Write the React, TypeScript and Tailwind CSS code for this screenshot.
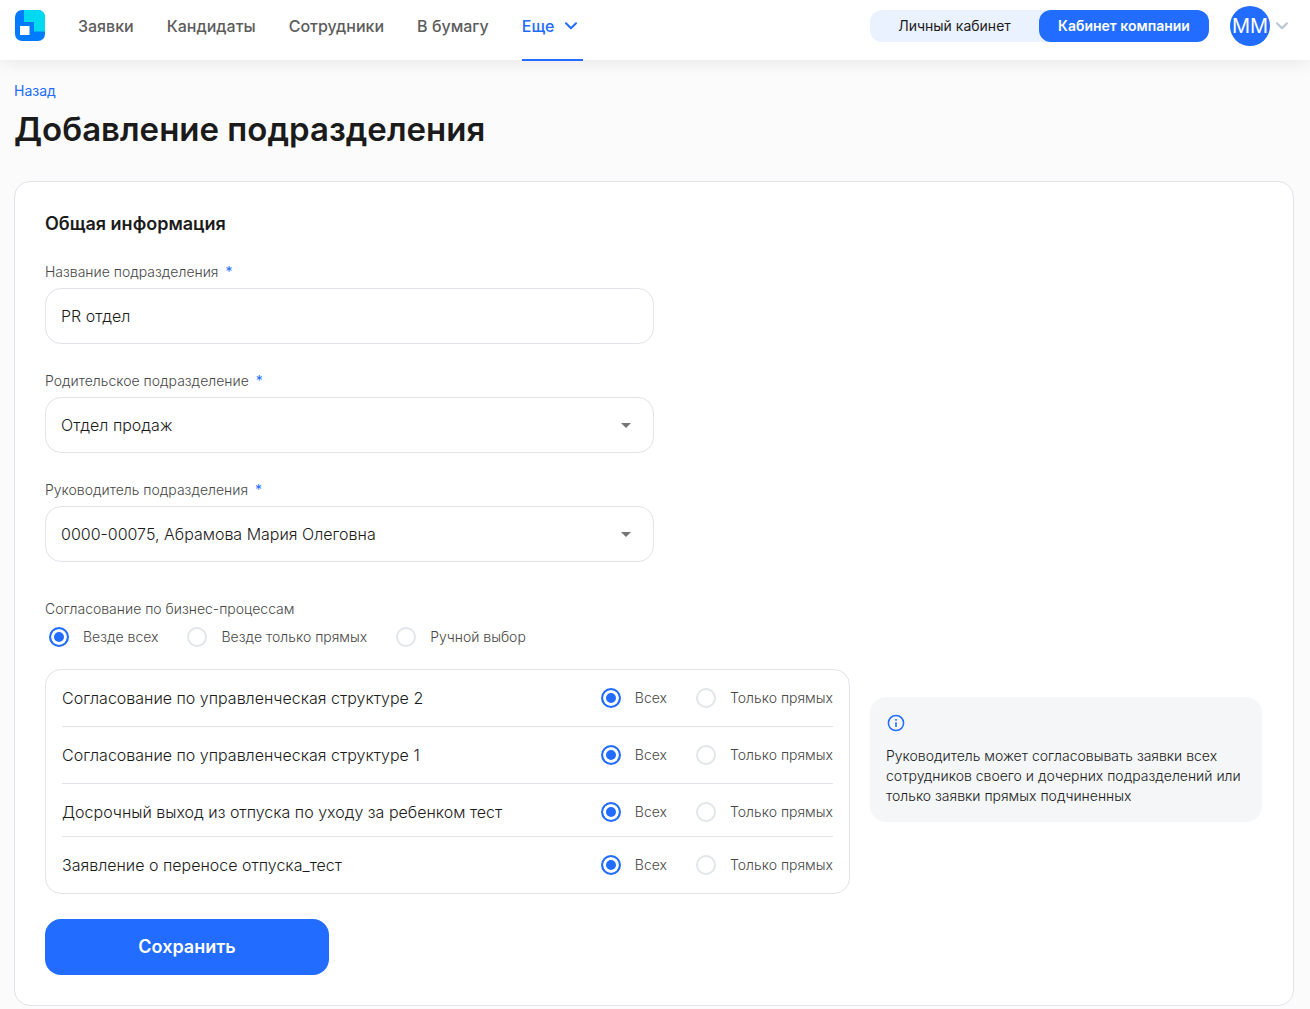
import { FC, ReactNode, useState } from 'react';

interface RadioProps {
  name: string;
  value: string;
  label: string;
  current: string;
  onChange: (value: string) => void;
}

const Radio: FC<RadioProps> = ({ name, value, label, current, onChange }) => (
  <label className="flex items-center gap-3.5 text-sm font-light text-[#484848]">
    <input
      type="radio"
      name={name}
      value={value}
      checked={current === value}
      onChange={() => onChange(value)}
      className="size-5 shrink-0 appearance-none rounded-full border-2 border-[#e2e5ea] bg-white checked:border-[#226dff] checked:bg-[#226dff] checked:shadow-[inset_0_0_0_3px_#fff]"
    />
    <span className="whitespace-nowrap">{label}</span>
  </label>
);

interface FieldProps {
  id: string;
  label: string;
  children: ReactNode;
}

const Field: FC<FieldProps> = ({ id, label, children }) => (
  <div>
    <label htmlFor={id} className="mb-1.5 block text-sm font-light text-[#484848]">
      {label} <span className="ml-[3px] font-normal text-[#226dff]">*</span>
    </label>
    {children}
  </div>
);

const SelectField: FC<{ id: string; label: string; options: string[] }> = ({ id, label, options }) => (
  <Field id={id} label={label}>
    <div className="relative">
      <select
        id={id}
        className="h-14 w-full appearance-none rounded-2xl border border-[#e2e3e9] bg-white px-[15px] text-base font-light text-[#1b1b1b]"
      >
        {options.map(option => (
          <option key={option}>{option}</option>
        ))}
      </select>
      <svg className="pointer-events-none absolute top-4 right-4 size-6" viewBox="0 0 24 24" fill="#757575">
        <path d="M7 10l5 5 5-5z" />
      </svg>
    </div>
  </Field>
);

const Chevron: FC<{ className: string }> = ({ className }) => (
  <svg className={className} viewBox="0 0 12 8" fill="none" stroke="currentColor" strokeWidth="2">
    <path d="M1 1.2L6 6.2L11 1.2" strokeLinecap="round" strokeLinejoin="round" />
  </svg>
);

const navItems = ['Заявки', 'Кандидаты', 'Сотрудники', 'В бумагу'];

const Header: FC = () => (
  <header className="flex h-15 justify-between bg-white pr-[22px] pl-3.5 shadow-[0_0_20px_rgba(0,0,0,0.1)]">
    <div className="flex">
      <a href="#" aria-label="Главная" className="mt-2.5 mr-8">
        <svg className="size-8" viewBox="0 0 32 32">
          <rect x="1" y="0" width="30" height="31" rx="7" fill="#007aff" />
          <path d="M10 0H24A7 7 0 0 1 31 7V21.500H20V12H10Z" fill="#00d9f0" />
          <rect x="6" y="16" width="9.500" height="9" fill="#fff" />
        </svg>
      </a>
      <nav className="flex gap-[33px] text-base font-medium text-[#5c5c5c]">
        {navItems.map(item => (
          <a key={item} href="#" className="flex h-13 items-center">
            {item}
          </a>
        ))}
        <button type="button" className="relative flex h-13 items-center gap-[11px] pr-1.5 text-[#226dff]">
          Еще
          <Chevron className="h-2 w-3" />
          <span className="absolute -bottom-[9px] left-0 h-0.5 w-full bg-[#226dff]" />
        </button>
      </nav>
    </div>

    <div className="flex h-13 items-center">
      <div className="flex h-8 rounded-xl bg-[#ebf2ff] text-sm">
        <button type="button" className="w-[169px] text-[#1b1b1b]">
          Личный кабинет
        </button>
        <button type="button" className="w-[170px] rounded-xl bg-[#226dff] font-semibold text-white">
          Кабинет компании
        </button>
      </div>
      <button type="button" className="ml-[21px] flex items-center gap-1.5 text-[#b9c5d3]">
        <span className="flex size-10 items-center justify-center rounded-full bg-[#226dff] text-xl text-white">
          ММ
        </span>
        <Chevron className="h-2 w-3" />
      </button>
    </div>
  </header>
);

const processes = [
  'Согласование по управленческая структуре 2',
  'Согласование по управленческая структуре 1',
  'Досрочный выход из отпуска по уходу за ребенком тест',
  'Заявление о переносе отпуска_тест',
];

const ProcessRow: FC<{ title: string; index: number }> = ({ title, index }) => {
  const [mode, setMode] = useState('all');
  // the row before the last one is a little tighter at the bottom
  const isTight = index === processes.length - 2;
  const isLast = index === processes.length - 1;

  return (
    <li
      className={`flex items-center justify-between ${isTight ? 'h-[53px] pt-1' : isLast ? 'h-14' : 'h-[57px]'} ${
        isLast ? '' : 'border-b border-[#e2e3e9]'
      }`}
    >
      <span className="text-base font-light text-[#1b1b1b]">{title}</span>
      <div className="flex gap-[29px]">
        <Radio name={`process-${index}`} value="all" label="Всех" current={mode} onChange={setMode} />
        <Radio name={`process-${index}`} value="direct" label="Только прямых" current={mode} onChange={setMode} />
      </div>
    </li>
  );
};

const App: FC = () => {
  const [name, setName] = useState('PR отдел');
  const [scope, setScope] = useState('everywhere');

  return (
    <div className="min-h-screen bg-[#fbfbfb] font-['Inter',sans-serif] text-[#1b1b1b]">
      <Header />

      <main className="pr-4 pl-3.5">
        <a href="#" className="inline-block pt-[21px] text-sm text-[#226dff]">
          Назад
        </a>
        <h1 className="mt-1.5 text-[33px] leading-[42px] font-semibold">Добавление подразделения</h1>

        <form
          className="mt-[31px] rounded-2xl border border-[#e2e3e9] bg-white p-[30px]"
          onSubmit={event => event.preventDefault()}
        >
          <h2 className="text-lg leading-6 font-semibold">Общая информация</h2>

          <div className="mt-[26px] flex max-w-[609px] flex-col gap-[27px]">
            <Field id="name" label="Название подразделения">
              <input
                id="name"
                type="text"
                value={name}
                onChange={event => setName(event.target.value)}
                className="block h-14 w-full rounded-2xl border border-[#e2e3e9] bg-white px-[15px] text-base font-light text-[#1b1b1b]"
              />
            </Field>
            <SelectField id="parent" label="Родительское подразделение" options={['Отдел продаж']} />
            <SelectField
              id="head"
              label="Руководитель подразделения"
              options={['0000-00075, Абрамова Мария Олеговна']}
            />
          </div>

          <fieldset className="mt-[37px]">
            <legend className="text-sm font-light text-[#484848]">Согласование по бизнес-процессам</legend>
            <div className="mt-2 ml-1 flex gap-[29px]">
              <Radio name="scope" value="everywhere" label="Везде всех" current={scope} onChange={setScope} />
              <Radio name="scope" value="direct" label="Везде только прямых" current={scope} onChange={setScope} />
              <Radio name="scope" value="manual" label="Ручной выбор" current={scope} onChange={setScope} />
            </div>
          </fieldset>

          <div className="mt-[22px] flex items-start gap-5">
            <ul className="w-[805px] rounded-2xl border border-[#e2e3e9] px-4">
              {processes.map((title, index) => (
                <ProcessRow key={title} title={title} index={index} />
              ))}
            </ul>
            <aside className="mt-7 mr-px flex-1 rounded-2xl bg-[#f4f6f8] p-4 text-sm font-light">
              <svg className="mb-[13px] size-5" viewBox="0 0 20 20" fill="none" stroke="#226dff">
                <circle cx="10" cy="10" r="7.600" strokeWidth="1.500" />
                <path d="M10 9.200V14M10 6V7.700" strokeWidth="1.600" />
              </svg>
              <p>Руководитель может согласовывать заявки всех сотрудников своего и дочерних подразделений или только заявки прямых подчиненных</p>
            </aside>
          </div>

          <button type="submit" className="mt-[25px] h-14 w-[284px] rounded-2xl bg-[#226dff] text-lg font-semibold text-white">
            Сохранить
          </button>
        </form>
      </main>
    </div>
  );
};

export default App;
